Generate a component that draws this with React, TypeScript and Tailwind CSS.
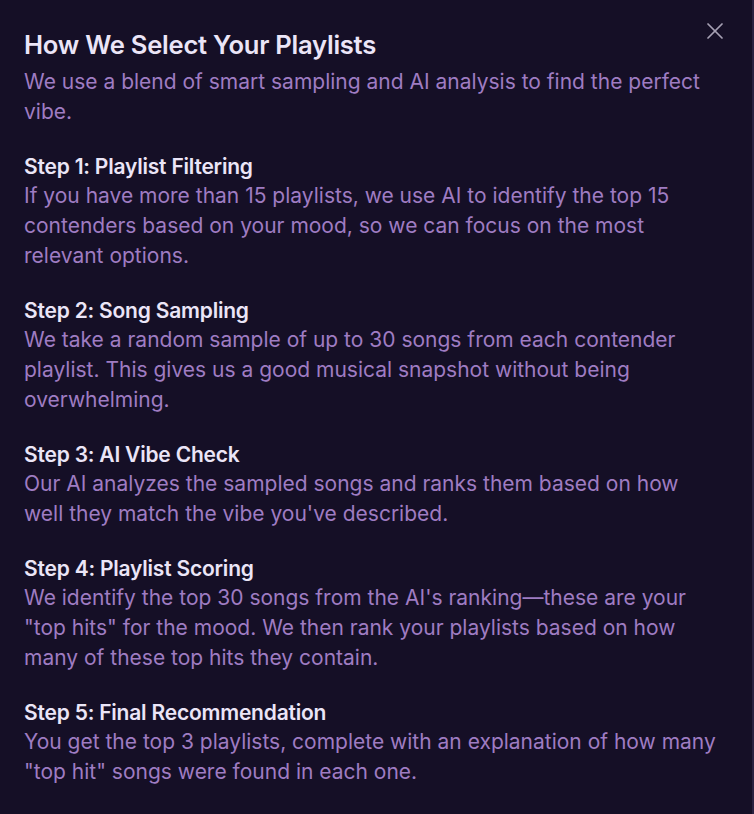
import { X } from 'lucide-react'

const steps = [
  {
    title: 'Step 1: Playlist Filtering',
    body: 'If you have more than 15 playlists, we use AI to identify the top 15 contenders based on your mood, so we can focus on the most relevant options.',
  },
  {
    title: 'Step 2: Song Sampling',
    body: 'We take a random sample of up to 30 songs from each contender playlist. This gives us a good musical snapshot without being overwhelming.',
  },
  {
    title: 'Step 3: AI Vibe Check',
    body: "Our AI analyzes the sampled songs and ranks them based on how well they match the vibe you've described.",
  },
  {
    title: 'Step 4: Playlist Scoring',
    body: 'We identify the top 30 songs from the AI\'s ranking\u2014these are your "top hits" for the mood. We then rank your playlists based on how many of these top hits they contain.',
  },
  {
    title: 'Step 5: Final Recommendation',
    body: 'You get the top 3 playlists, complete with an explanation of how many "top hit" songs were found in each one.',
  },
]

export default function App() {
  return (
    <div
      className="relative min-h-[814px] w-[754px] bg-[#150f26] border-r-2 border-[#2a2140] pl-6 pr-8 pt-[29px] pb-6"
      style={{ fontFamily: "Inter, 'Noto Sans', sans-serif" }}
    >
      <button className="absolute right-[23px] top-[17px] text-[#a6a0b3]">
        <X size={28} strokeWidth={1.5} />
      </button>

      <h2 className="text-[25.6px] leading-8 font-semibold tracking-[-0.01em] text-[#ebe5f7]">
        How We Select Your Playlists
      </h2>
      <p className="mt-1.5 text-[21px] leading-[30px] text-[#9f7cc2]">
        We use a blend of smart sampling and AI analysis to find the perfect vibe.
      </p>

      <div className="mt-[26px] flex flex-col gap-[26px]">
        {steps.map(step => (
          <div key={step.title}>
            <h3 className="text-[21px] leading-7 font-semibold tracking-[-0.01em] text-[#ebe5f7]">
              {step.title}
            </h3>
            <p className="text-[21px] leading-[30px] text-[#9f7cc2]">{step.body}</p>
          </div>
        ))}
      </div>
    </div>
  )
}
